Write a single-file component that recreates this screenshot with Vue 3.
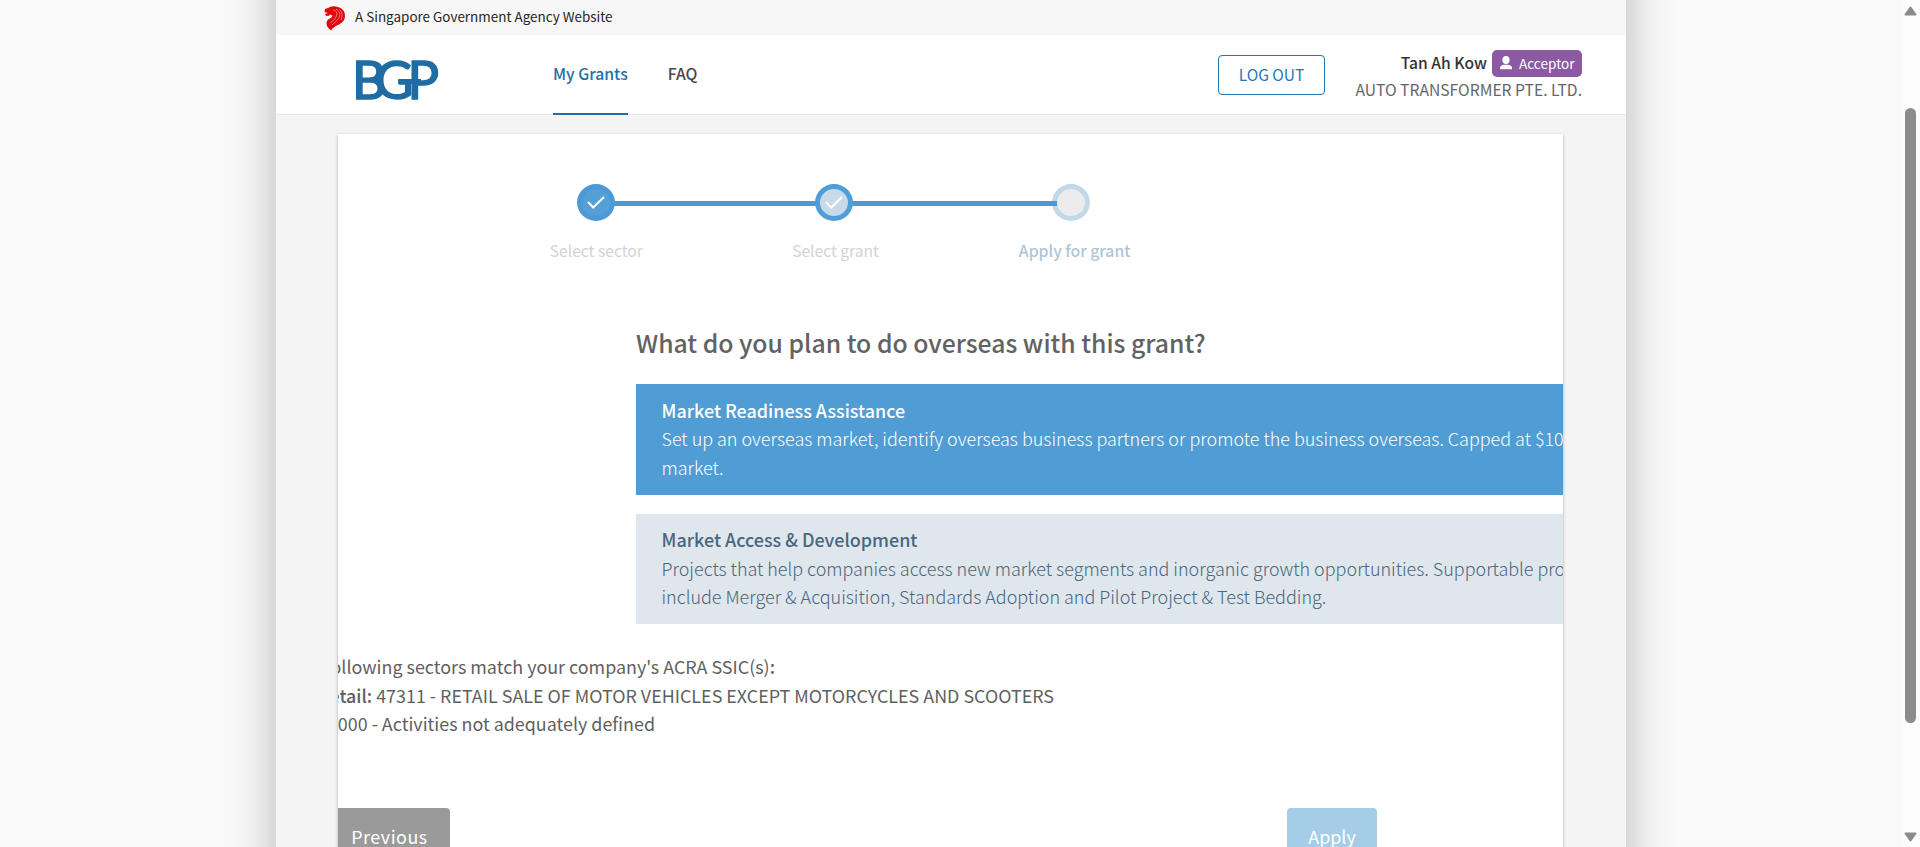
<script setup>
const steps = [
  { label: 'Select sector', state: 'done' },
  { label: 'Select grant', state: 'partial' },
  { label: 'Apply for grant', state: 'todo' }
]
</script>

<template>
  <div class="page">
    <div class="gutter"></div>
    <div class="shell">
      <div class="masthead">
        <svg class="lion" width="22" height="25" viewBox="0 0 22 25">
          <path d="M1 3 L4 2 Q8 -1 14 1 Q21 3 21 10 Q21 16 14 19 Q9 21 7 24.500 Q1 20 3 15 L4 13.500 Q8 12 8.500 9.500 L6 8.500 L4.500 10 L2 9.800 L1 8 L4 7 L0.500 6 Z" fill="#e0060c" />
          <path d="M9 4 Q14 5 12.500 10 Q11 14 6.500 16.500 M12 3 Q17 6 15.500 11 Q13 15 8 19 M15.500 3.500 Q20 8 17 14" fill="none" stroke="#f6a9ab" stroke-width=".7" />
        </svg>
        <span>A Singapore Government Agency Website</span>
      </div>

      <header class="header">
        <svg class="logo" width="82" height="40" viewBox="0 0 82 40" aria-label="BGP">
          <g font-family="Lato, sans-serif" font-weight="400" font-size="52.500" fill="#1f6ca3" stroke="#1f6ca3" stroke-width="1.600">
            <text x="-3.900" y="38.900">B</text>
            <text x="19" y="38.900">G</text>
            <text x="51.500" y="38.900">P</text>
          </g>
          <rect x="43" y="19" width="22" height="5" fill="#1f6ca3" />
        </svg>
        <nav class="nav">
          <a class="active">My Grants</a>
          <a>FAQ</a>
        </nav>
        <button class="logout">LOG OUT</button>
        <div class="user">
          <div class="who">
            <span class="name">Tan Ah Kow</span>
            <span class="badge">
              <svg width="12" height="14" viewBox="0 0 12 14" fill="#fff">
                <ellipse cx="6" cy="4" rx="3.600" ry="4" />
                <path d="M0 13.300 V11.500 Q.5 9.200 4 8.800 H8 Q11.500 9.200 12 11.500 V13.300 Z" />
              </svg>
              <span>Acceptor</span>
            </span>
          </div>
          <div class="company">AUTO TRANSFORMER PTE. LTD.</div>
        </div>
      </header>

      <main class="card">
        <div class="stepper">
          <div v-for="s in steps" :key="s.label" class="step" :class="s.state">
            <div class="dot">
              <svg v-if="s.state !== 'todo'" width="18" height="14" viewBox="0 0 18 14">
                <path d="M1.500 6.500 L6.200 11.500 L16.500 1.500" fill="none" stroke="#fff" stroke-width="2" stroke-linecap="round" />
              </svg>
            </div>
            <div class="label">{{ s.label }}</div>
          </div>
        </div>

        <section class="question">
          <h2>What do you plan to do overseas with this grant?</h2>
          <div class="option selected">
            <strong>Market Readiness Assistance</strong>
            <p>Set up an overseas market, identify overseas business partners or promote the business overseas. Capped at $100,000 per new<br>market.</p>
          </div>
          <div class="option">
            <strong>Market Access &amp; Development</strong>
            <p>Projects that help companies access new market segments and inorganic growth opportunities. Supportable project areas<br>include Merger &amp; Acquisition, Standards Adoption and Pilot Project &amp; Test Bedding.</p>
          </div>
        </section>

        <section class="sectors">
          <div class="intro"><span>The following sectors match your company's ACRA SSIC(s)<b>:</b></span></div>
          <div class="retail"><span><b>Retail:</b> 47311 - RETAIL SALE OF MOTOR VEHICLES EXCEPT MOTORCYCLES AND SCOOTERS</span></div>
          <div class="other"><span>00000 - Activities not adequately defined</span></div>
        </section>

        <div class="actions">
          <button class="prev">Previous</button>
          <button class="apply">Apply</button>
        </div>
      </main>
    </div>
    <div class="gutter"></div>
    <div class="scrollbar">
      <svg width="13" height="10" viewBox="0 0 13 10"><path d="M6.500 1.500 L11.500 8.500 H1.500 Z" fill="#8b8b8b" stroke="#8b8b8b" stroke-width="2" stroke-linejoin="round" /></svg>
      <div class="thumb"></div>
      <svg width="13" height="10" viewBox="0 0 13 10"><path d="M6.500 8.500 L11.500 1.500 H1.500 Z" fill="#8b8b8b" stroke="#8b8b8b" stroke-width="2" stroke-linejoin="round" /></svg>
    </div>
  </div>
</template>

<style>
body { margin: 0; overflow: hidden; background: #f9f9f9; }
</style>

<style scoped>
* { box-sizing: border-box; }
.page {
  display: flex;
  width: 1920px;
  height: 847px;
  overflow: hidden;
  background: #f9f9f9;
  color: #5f5f5f;
  font-family: "Noto Sans CJK SC", "Noto Sans", sans-serif;
  white-space: nowrap;
}
.gutter { flex: 0 0 276px; }
.gutter + .scrollbar { margin-left: -1px; }
.shell {
  flex: 0 0 1350px;
  height: 1100px;
  margin-top: -100px;
  padding-top: 100px;
  background: #f4f4f4;
  box-shadow: 0 0 44px rgba(0, 0, 0, .27);
}
.masthead {
  display: flex;
  align-items: center;
  gap: 9px;
  height: 35px;
  padding-left: 48px;
  background: #f7f7f7;
  color: #262626;
  font-size: 13.46px;
}
.masthead span { line-height: 20px; margin-bottom: 4px; }
.lion { margin-top: 1px; }
.header {
  display: flex;
  height: 80px;
  border-bottom: 1px solid #e9e9e9;
  background: #fff;
}
.logo { margin: 25px 0 0 80px; overflow: visible; }
.nav {
  display: flex;
  gap: 40px;
  width: 780px;
  margin-left: 115px;
  height: 80px;
  font-size: 15.75px;
  font-weight: 500;
  color: #484848;
}
.nav a { height: 80px; line-height: 77px; }
.nav .active { color: #1f70a7; border-bottom: 2px solid #1f70a7; }
.logout {
  width: 107px;
  height: 40px;
  margin: 20px 0 0 -115px;
  padding: 0 0 2px;
  border: 1px solid #1f78b6;
  border-radius: 4px;
  background: #fff;
  color: #1f78b6;
  font: 400 15.5px/36px "Noto Sans CJK SC", sans-serif;
}
.user { width: 257px; padding-top: 15px; text-align: right; font-size: 15.68px; }
.who { display: flex; justify-content: flex-end; gap: 5px; height: 27px; }
.name { color: #333; font-weight: 500; font-size: 15.65px; line-height: 25px; }
.badge {
  display: flex;
  align-items: center;
  gap: 7px;
  width: 90px;
  height: 27px;
  padding-left: 8px;
  border-radius: 5px;
  background: #8b5aa2;
  color: #fff;
  font-size: 13.6px;
}
.badge svg { margin-bottom: 2px; }
.badge span { line-height: 27px; margin-bottom: 1px; }
.company { line-height: 25px; color: #666; }
.card {
  width: 1225px;
  height: 730px;
  margin: 19px 0 0 62px;
  overflow: hidden;
  background: #fff;
  box-shadow: 0 1px 3px rgba(0, 0, 0, .3);
}
.stepper { display: flex; width: 713px; margin-left: 139px; padding-top: 50px; height: 159px; }
.step { display: flex; flex-direction: column; align-items: center; flex: 1; position: relative; }
.step:not(:last-child)::after {
  content: "";
  position: absolute;
  left: calc(50% + 18px);
  top: 17px;
  width: 205px;
  height: 5px;
  background: #4b9ad6;
  z-index: 1;
}
.dot {
  display: flex;
  align-items: center;
  justify-content: center;
  width: 38px;
  height: 37px;
  border-radius: 50%;
  border: 5px solid #4b9ad6;
  background: #539fd6;
}
.partial .dot { border-color: #509dd7; background: #c8dae7; }
.todo .dot { border-color: #c1d8e8; background: #ececec; }
.label { margin: 16px 0 0 1px; font-size: 15.6px; line-height: 26px; color: #d3d3d3; }
.partial .label { margin-left: 4px; }
.todo .label { margin: 17px 0 0 7px; font-size: 15.75px; font-weight: 500; color: #afc5d6; }
.question { width: 1100px; margin-left: 298px; }
h2 { margin: 0 0 24px; font-size: 24.75px; font-weight: 500; line-height: 34px; height: 67px; padding-top: 32px; color: #626262; }
.option {
  height: 110px;
  padding: 11px 26px 0 25.5px;
  margin-bottom: 20px;
  background: #dfe6ec;
  color: #486780;
  font-size: 17.95px;
  line-height: 28.6px;
}
.option.selected { height: 111px; padding-top: 12px; margin-bottom: 19px; background: #509dd5; color: #fff; }
.option strong { display: block; font-weight: 500; }
.option p { margin: 0; font-weight: 300; }
.option.selected p { margin-top: -.4px; }
.sectors { height: 156px; padding-top: 8px; font-size: 17.9px; line-height: 28.6px; }
.sectors div { display: flex; justify-content: flex-end; }
.sectors b { font-weight: 500; }
.sectors .intro { width: 437px; }
.sectors .retail { width: 716px; }
.sectors .other { width: 317px; }
.actions { display: flex; justify-content: space-between; width: 1039px; margin-top: 8px; }
.actions button {
  height: 57px;
  padding: 0 0 2px;
  border: 0;
  border-radius: 4px;
  color: #fff;
  font: 400 17.9px/54px "Noto Sans CJK SC", sans-serif;
}
.actions .prev { width: 136px; margin-left: -24px; padding-left: 15px; background: #9a9a9a; letter-spacing: .5px; }
.actions .apply { width: 90px; background: #a5cde8; }
.scrollbar {
  display: flex;
  flex-direction: column;
  align-items: center;
  flex: 0 0 19px;
  height: 847px;
  padding: 6px 0 5px;
  background: #fcfcfc;
  position: relative;
}
.thumb { width: 11px; height: 615px; margin: 92px 0 109px; border-radius: 6px; background: #8b8b8b; flex: none; }
</style>
